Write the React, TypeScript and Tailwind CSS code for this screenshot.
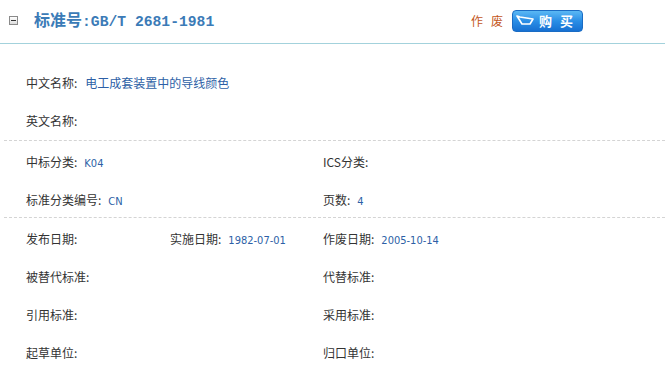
import React from "react";

const cjk = { fontFamily: '"SimSun","Noto Sans CJK SC","Liberation Sans",sans-serif' };
const mono = { fontFamily: '"Liberation Mono","DejaVu Sans Mono",monospace' };
const narrow = { fontFamily: '"Liberation Sans Narrow","DejaVu Sans Condensed","Liberation Sans",sans-serif' };

function Val({ children }: { children: React.ReactNode }) {
  return (
    <span className="ml-[7px] text-[11px] text-[#2d5fa6]" style={narrow}>
      {children}
    </span>
  );
}

function Label({ children }: { children: React.ReactNode }) {
  return <span className="text-[12px] text-[#333]">{children}</span>;
}

function Row({ children }: { children: React.ReactNode }) {
  return <div className="flex h-[38px] items-center pl-[26px]">{children}</div>;
}

function Dashed() {
  return <div className="ml-[4px] h-0 border-t border-dashed border-[#d4d4d4]" />;
}

export default function App() {
  return (
    <div className="h-[370px] w-[665px] overflow-hidden bg-white" style={cjk}>
      {/* header */}
      <div className="flex h-[44px] items-center justify-between border-b border-[#a3d2dc] pb-[2px]">
        <div className="flex items-center">
          <div className="ml-[9px] flex h-[9px] w-[9px] items-center justify-center border border-[#8a8a8a] bg-gradient-to-b from-white to-[#dcdcdc]">
            <div className="h-px w-[5px] bg-[#333]" />
          </div>
          <div className="ml-[16px] flex items-baseline text-[16px] font-bold text-[#3b7bb7]">
            <span>标准号</span>
            <span className="text-[14.7px]" style={mono}>:GB/T 2681-1981</span>
          </div>
        </div>
        <div className="mr-[82px] flex items-center">
          <span className="mr-[1px] text-[12px] tracking-[8px] text-[#c3561b]">作废</span>
          <div className="flex h-[22px] w-[71px] items-center rounded-[4px] border border-[#1a6cc4] bg-gradient-to-b from-[#5ab8f4] via-[#2a8ee6] to-[#1670d2]">
            <svg width="20" height="12" viewBox="0 0 20 12" className="ml-[3px]">
              <path d="M1 1 L4 2 L17 4 L14 9 L6 9 Z" fill="none" stroke="white" strokeWidth="1.6" strokeLinejoin="round" />
            </svg>
            <span className="ml-[3px] text-[13px] font-bold tracking-[8px] text-white">购买</span>
          </div>
        </div>
      </div>

      <div className="pt-[20px]">
        <Row>
          <Label>中文名称:</Label>
          <span className="ml-[8px] text-[12px] text-[#2d5fa6]">电工成套装置中的导线颜色</span>
        </Row>
        <Row>
          <Label>英文名称:</Label>
        </Row>
        <Dashed />
        <Row>
          <div className="w-[297px]">
            <Label>中标分类:</Label>
            <Val>K04</Val>
          </div>
          <div>
            <Label>ICS分类:</Label>
          </div>
        </Row>
        <Row>
          <div className="w-[297px]">
            <Label>标准分类编号:</Label>
            <Val>CN</Val>
          </div>
          <div>
            <Label>页数:</Label>
            <Val>4</Val>
          </div>
        </Row>
        <Dashed />
        <Row>
          <div className="w-[144px]">
            <Label>发布日期:</Label>
          </div>
          <div className="w-[153px]">
            <Label>实施日期:</Label>
            <Val>1982-07-01</Val>
          </div>
          <div>
            <Label>作废日期:</Label>
            <Val>2005-10-14</Val>
          </div>
        </Row>
        <Row>
          <div className="w-[297px]">
            <Label>被替代标准:</Label>
          </div>
          <div>
            <Label>代替标准:</Label>
          </div>
        </Row>
        <Row>
          <div className="w-[297px]">
            <Label>引用标准:</Label>
          </div>
          <div>
            <Label>采用标准:</Label>
          </div>
        </Row>
        <Row>
          <div className="w-[297px]">
            <Label>起草单位:</Label>
          </div>
          <div>
            <Label>归口单位:</Label>
          </div>
        </Row>
      </div>
    </div>
  );
}
